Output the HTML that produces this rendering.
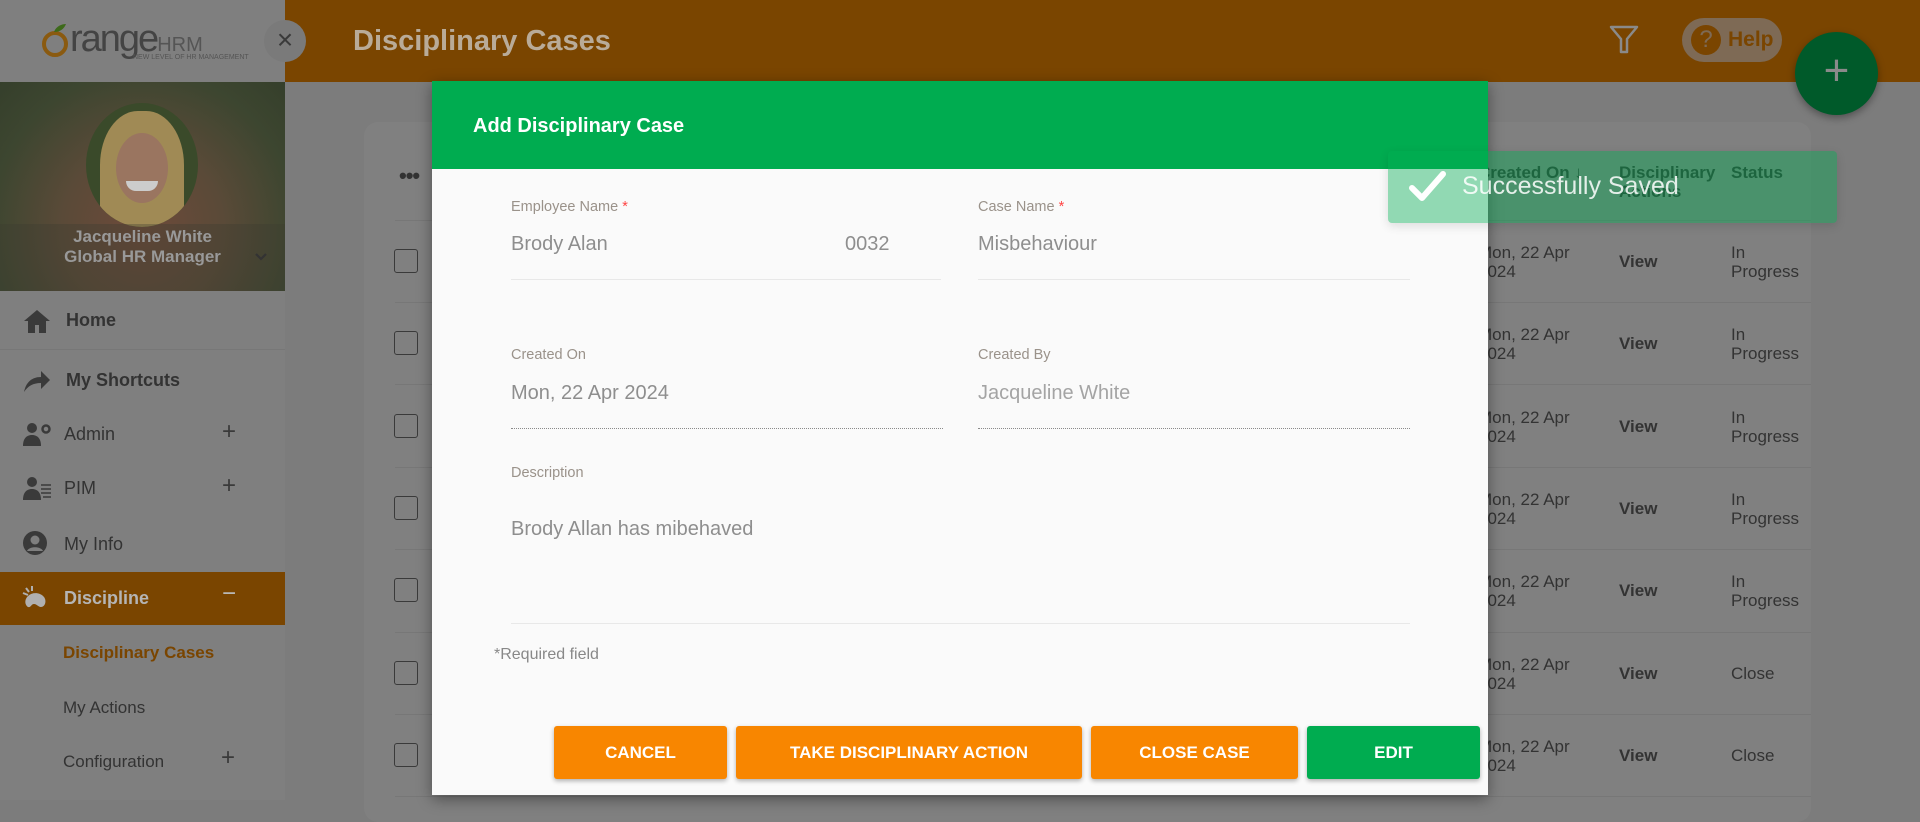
<!DOCTYPE html>
<html><head><meta charset="utf-8">
<style>
*{box-sizing:border-box;margin:0;padding:0}
body{width:1920px;height:800px;overflow:hidden;background:#7c7c7c;font-family:"Liberation Sans",sans-serif;position:relative}
.abs{position:absolute}
.top{left:0;top:0;width:1920px;height:82px;background:#7a4500}
.side{left:0;top:0;width:285px;height:800px;background:#7f7f7f}
.logo{left:0;top:0;width:285px;height:82px;background:#7f7f7f}
.prof{left:0;top:82px;width:285px;height:209px;background:radial-gradient(ellipse at 50% 70%,#6e4a3a 0%,#5a4a38 40%,#3d4630 75%,#353f2b 100%)}
.mi{position:absolute;left:0;width:285px;font-size:18px;color:#333;font-weight:bold}
.mi svg{position:absolute;left:22px}
.plus{position:absolute;left:222px;font-size:24px;color:#3a3a3a;font-weight:normal}
.card{left:364px;top:122px;width:1447px;height:700px;background:#808080;border-radius:14px}
.cb{position:absolute;left:394px;width:24px;height:24px;border:1.5px solid #3a3a3a;border-radius:3px}
.sep{position:absolute;left:395px;width:1416px;height:1px;background:#777}
.cell{position:absolute;font-size:17px;color:#333;line-height:19px}
.modal{left:432px;top:81px;width:1056px;height:714px;background:#fafafa;box-shadow:0 4px 14px rgba(0,0,0,.4)}
.mh{left:0;top:0;width:1056px;height:88px;background:#00ac50;color:#fff;font-weight:bold;font-size:20px;padding:34px 0 0 41px}
.lab{position:absolute;font-size:14.5px;color:#9a928a}
.lab b{color:#f44;font-weight:normal}
.val{position:absolute;font-size:20px;color:#8e8e8e}
.ul{position:absolute;height:1px;background:#e8e8e8}
.dl{position:absolute;height:0;border-top:1.5px dotted #8a8a8a}
.btn{position:absolute;top:645px;height:53px;border-radius:3px;color:#fff;font-size:17px;font-weight:bold;text-align:center;line-height:53px;box-shadow:0 2px 5px rgba(0,0,0,.3)}
</style></head><body>
<div class="abs top"></div>
<div class="abs" style="left:353px;top:25px;font-size:29px;color:#b9ab98;font-weight:bold">Disciplinary Cases</div>
<svg class="abs" style="left:1608px;top:24px" width="32" height="32" viewBox="0 0 32 32"><path d="M3 3h26L19 15v13h-6V15z" fill="none" stroke="#8a8a8a" stroke-width="2.5" stroke-linejoin="round"/></svg>
<div class="abs" style="left:1682px;top:18px;width:100px;height:44px;border-radius:22px;background:#7e6a55"></div>
<div class="abs" style="left:1691px;top:25px;width:30px;height:30px;border-radius:50%;background:#7a4500;font-size:24px;text-align:center;line-height:30px;color:#7e6a55">?</div>
<div class="abs" style="left:1728px;top:28px;font-size:21px;font-weight:bold;color:#7a4500">Help</div>

<div class="abs side"></div>
<div class="abs logo"></div>
<svg class="abs" style="left:40px;top:22px" width="30" height="38" viewBox="0 0 30 38"><circle cx="15" cy="22" r="11" fill="none" stroke="#8a5a10" stroke-width="4"/><path d="M14 10c2-6 8-8 12-8-2 5-6 8-12 8z" fill="#3d6a1a"/></svg>
<div class="abs" style="left:70px;top:18px;font-size:38px;color:#444;letter-spacing:-2px">range<span style="font-size:20px;color:#555;letter-spacing:0">HRM</span></div>
<div class="abs" style="left:133px;top:54px;font-size:7px;color:#555">NEW LEVEL OF HR MANAGEMENT</div>
<div class="abs" style="left:264px;top:20px;width:42px;height:42px;border-radius:21px;background:#7a7a7a;color:#3a3a3a;font-size:28px;line-height:40px;text-align:center">×</div>

<div class="abs prof"></div>
<div class="abs" style="left:86px;top:103px;width:112px;height:124px;border-radius:50%;background:#3a4a2a;overflow:hidden">
<div class="abs" style="left:14px;top:8px;width:84px;height:120px;border-radius:45% 45% 20% 20%;background:#a08a55"></div>
<div class="abs" style="left:30px;top:30px;width:52px;height:70px;border-radius:50%;background:#9a7560"></div>
<div class="abs" style="left:40px;top:78px;width:32px;height:10px;border-radius:0 0 16px 16px;background:#ccc"></div>
</div>
<div class="abs" style="left:0;top:224px;width:285px;height:67px;background:rgba(60,60,50,.35)"></div>
<div class="abs" style="left:0;top:227px;width:285px;text-align:center;font-size:17px;font-weight:bold;color:#999;line-height:20px">Jacqueline White<br>Global HR Manager</div>
<svg class="abs" style="left:254px;top:252px" width="14" height="10" viewBox="0 0 14 10"><path d="M2 2l5 5 5-5" fill="none" stroke="#333" stroke-width="2.2"/></svg>

<div class="mi" style="top:308px;height:42px;border-bottom:1px solid #777"><svg style="top:0" width="30" height="26" viewBox="0 0 30 26"><path d="M15 2L2 13h4v12h7v-8h4v8h7V13h4z" fill="#3a3a3a"/></svg><span style="position:absolute;left:66px;top:2px">Home</span></div>
<div class="mi" style="top:368px"><svg style="top:0" width="30" height="26" viewBox="0 0 30 26"><path d="M2 24C4 14 10 9 19 9V3l9 9-9 9v-6C11 15 6 18 2 24z" fill="#3a3a3a"/></svg><span style="position:absolute;left:66px;top:2px">My Shortcuts</span></div>
<div class="mi" style="top:422px;font-weight:normal"><svg style="top:0" width="30" height="26" viewBox="0 0 30 26"><circle cx="10" cy="6" r="5" fill="#3a3a3a"/><path d="M1 24c0-8 4-11 9-11s9 3 9 11z" fill="#3a3a3a"/><circle cx="24" cy="7" r="3.5" fill="none" stroke="#3a3a3a" stroke-width="2.5"/></svg><span style="position:absolute;left:64px;top:2px">Admin</span><span class="plus" style="top:-4px">+</span></div>
<div class="mi" style="top:476px;font-weight:normal"><svg style="top:0" width="30" height="26" viewBox="0 0 30 26"><circle cx="10" cy="6" r="5" fill="#3a3a3a"/><path d="M1 24c0-8 4-11 9-11s9 3 9 11z" fill="#3a3a3a"/><path d="M19 9h10M19 13h10M19 17h10M21 21h8" stroke="#3a3a3a" stroke-width="1.6"/></svg><span style="position:absolute;left:64px;top:2px">PIM</span><span class="plus" style="top:-4px">+</span></div>
<div class="mi" style="top:530px;font-weight:normal"><svg style="top:0" width="28" height="28" viewBox="0 0 28 28"><circle cx="13" cy="13" r="12" fill="#3a3a3a"/><circle cx="13" cy="10" r="4.5" fill="#7f7f7f"/><path d="M5 21c2-5 14-5 16 0" fill="#7f7f7f"/></svg><span style="position:absolute;left:64px;top:4px">My Info</span></div>
<div class="abs" style="left:0;top:572px;width:285px;height:53px;background:#7a4500"></div>
<div class="mi" style="top:586px;color:#b5b5b5"><svg style="top:0" width="30" height="26" viewBox="0 0 30 26"><path d="M6 10c4-4 12-4 16 1 3 4 1 10-3 10-3 0-4-3-7-3-3 0-3 4-6 3-3-2-4-7 0-11z" fill="#b0b0b0"/><path d="M4 2l3 4M10 0v5M1 7l5 2" stroke="#b0b0b0" stroke-width="2"/></svg><span style="position:absolute;left:64px;top:2px">Discipline</span><span class="plus" style="top:-6px;color:#bbb">−</span></div>
<div class="abs" style="left:63px;top:643px;font-size:17px;color:#7a4500;font-weight:bold">Disciplinary Cases</div>
<div class="abs" style="left:63px;top:698px;font-size:17px;color:#333">My Actions</div>
<div class="abs" style="left:63px;top:752px;font-size:17px;color:#333">Configuration</div>
<div class="abs" style="left:221px;top:744px;font-size:24px;color:#3a3a3a">+</div>

<div class="abs card"></div>
<div class="abs" style="left:399px;top:163px;font-size:22px;color:#333;letter-spacing:-1px;font-weight:bold">•••</div>
<div class="sep" style="top:220px"></div>
<div class="cb" style="top:249px"></div><div class="sep" style="top:302px"></div>
<div class="cb" style="top:331px"></div><div class="sep" style="top:384px"></div>
<div class="cb" style="top:414px"></div><div class="sep" style="top:467px"></div>
<div class="cb" style="top:496px"></div><div class="sep" style="top:549px"></div>
<div class="cb" style="top:578px"></div><div class="sep" style="top:632px"></div>
<div class="cb" style="top:661px"></div><div class="sep" style="top:714px"></div>
<div class="cb" style="top:743px"></div><div class="sep" style="top:796px"></div>

<div class="cell" style="left:1478px;top:163px;font-weight:bold">Created On ↓</div>
<div class="cell" style="left:1619px;top:163px;font-weight:bold">Disciplinary<br>Actions</div>
<div class="cell" style="left:1731px;top:163px;font-weight:bold">Status</div>

<div class="cell" style="left:1478px;top:243px">Mon, 22 Apr<br>2024</div><div class="cell" style="left:1619px;top:252px;font-weight:bold">View</div><div class="cell" style="left:1731px;top:243px">In<br>Progress</div>
<div class="cell" style="left:1478px;top:325px">Mon, 22 Apr<br>2024</div><div class="cell" style="left:1619px;top:334px;font-weight:bold">View</div><div class="cell" style="left:1731px;top:325px">In<br>Progress</div>
<div class="cell" style="left:1478px;top:408px">Mon, 22 Apr<br>2024</div><div class="cell" style="left:1619px;top:417px;font-weight:bold">View</div><div class="cell" style="left:1731px;top:408px">In<br>Progress</div>
<div class="cell" style="left:1478px;top:490px">Mon, 22 Apr<br>2024</div><div class="cell" style="left:1619px;top:499px;font-weight:bold">View</div><div class="cell" style="left:1731px;top:490px">In<br>Progress</div>
<div class="cell" style="left:1478px;top:572px">Mon, 22 Apr<br>2024</div><div class="cell" style="left:1619px;top:581px;font-weight:bold">View</div><div class="cell" style="left:1731px;top:572px">In<br>Progress</div>
<div class="cell" style="left:1478px;top:655px">Mon, 22 Apr<br>2024</div><div class="cell" style="left:1619px;top:664px;font-weight:bold">View</div><div class="cell" style="left:1731px;top:664px">Close</div>
<div class="cell" style="left:1478px;top:737px">Mon, 22 Apr<br>2024</div><div class="cell" style="left:1619px;top:746px;font-weight:bold">View</div><div class="cell" style="left:1731px;top:746px">Close</div>

<div class="abs" style="left:1795px;top:32px;width:83px;height:83px;border-radius:50%;background:#005a2a;box-shadow:0 3px 8px rgba(0,0,0,.35)"></div>
<div class="abs" style="left:1795px;top:46px;width:83px;text-align:center;font-size:44px;color:#8a8a8a;line-height:50px">+</div>

<div class="abs modal">
<div class="abs mh">Add Disciplinary Case</div>
<div class="lab" style="left:79px;top:118px">Employee Name <b>*</b></div>
<div class="val" style="left:79px;top:152px">Brody Alan</div>
<div class="val" style="left:413px;top:152px">0032</div>
<div class="ul" style="left:79px;top:198px;width:430px"></div>
<div class="lab" style="left:546px;top:118px">Case Name <b>*</b></div>
<div class="val" style="left:546px;top:152px">Misbehaviour</div>
<div class="ul" style="left:546px;top:198px;width:432px"></div>
<div class="lab" style="left:79px;top:266px">Created On</div>
<div class="val" style="left:79px;top:301px">Mon, 22 Apr 2024</div>
<div class="dl" style="left:79px;top:347px;width:432px"></div>
<div class="lab" style="left:546px;top:266px">Created By</div>
<div class="val" style="left:546px;top:301px;color:#a4a4a4">Jacqueline White</div>
<div class="dl" style="left:546px;top:347px;width:432px"></div>
<div class="lab" style="left:79px;top:384px">Description</div>
<div class="val" style="left:79px;top:437px">Brody Allan has mibehaved</div>
<div class="ul" style="left:79px;top:542px;width:899px"></div>
<div class="lab" style="left:62px;top:565px;font-size:16px;color:#888">*Required field</div>
<div class="btn" style="left:122px;width:173px;background:#f88600">CANCEL</div>
<div class="btn" style="left:304px;width:346px;background:#f88600">TAKE DISCIPLINARY ACTION</div>
<div class="btn" style="left:659px;width:207px;background:#f88600">CLOSE CASE</div>
<div class="btn" style="left:875px;width:173px;background:#00ac50">EDIT</div>
</div>

<div class="abs" style="left:1388px;top:151px;width:449px;height:72px;border-radius:4px;background:rgba(0,171,82,0.42);box-shadow:0 3px 10px rgba(0,0,0,.12)"></div>
<svg class="abs" style="left:1408px;top:170px" width="40" height="34" viewBox="0 0 40 34"><path d="M4 18l10 10L35 4" fill="none" stroke="#fff" stroke-width="6" stroke-linecap="round" stroke-linejoin="round"/></svg>
<div class="abs" style="left:1462px;top:172px;font-size:25px;color:rgba(255,255,255,.85)">Successfully Saved</div>
</body></html>
